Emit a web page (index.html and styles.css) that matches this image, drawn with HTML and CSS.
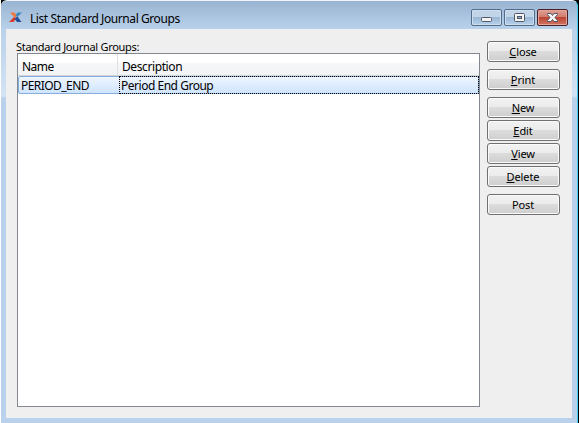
FILE: index.html
```html
<!DOCTYPE html>
<html lang="en">
<head>
<meta charset="utf-8">
<title>List Standard Journal Groups</title>
<link rel="stylesheet" href="styles.css">
</head>
<body>
<div class="window">
  <header class="titlebar">
    <svg class="logo" width="14" height="11" viewBox="0 0 14 11">
      <path d="M1 .5h4.500l2.500 3.500-2 2z" fill="#f0783c"/>
      <path d="M5 5l2 2-2.500 3H0z" fill="#d83a2c"/>
      <path d="M8.500 .5H13L8.500 5 6.500 3z" fill="#3c8cc0"/>
      <path d="M8.500 4.500L12.500 10H8L5.500 6.500z" fill="#244f9c"/>
    </svg>
    <h1 class="title">List Standard Journal Groups</h1>
    <div class="controls">
      <button class="control" aria-label="Minimize"><svg width="29" height="15" viewBox="0 0 29 15"><rect x="9.500" y="7.500" width="10" height="4" rx="1" fill="#f4f4f4" stroke="#535666"/></svg></button>
      <button class="control" aria-label="Maximize"><svg width="29" height="15" viewBox="0 0 29 15"><rect x="9.500" y="3.500" width="10" height="8" rx="1" fill="#f4f4f4" stroke="#535666"/><rect x="12.500" y="6.500" width="4" height="2" fill="#8eb1d2" stroke="#535666"/></svg></button>
      <button class="control control-close" aria-label="Close window"><svg width="29" height="15" viewBox="0 0 29 15"><path d="M9.500 3.500h3.500l1.500 2 1.500-2h3.500v1L17 7.500l2.500 3v1H16l-1.500-2-1.500 2H9.500v-1l2.500-3-2.500-3z" fill="#f6f6f6" stroke="#535666"/></svg></button>
    </div>
  </header>
  <main class="content">
    <section class="groups">
      <div class="label">Standard Journal Groups:</div>
      <div class="list">
        <div class="row head"><span class="name"><span class="h-name">Name</span></span><span class="desc"><span class="h-desc">Description</span></span></div>
        <div class="row selected"><span class="name"><span class="v-name">PERIOD_END</span></span><span class="desc focus"><span class="v-desc">Period End Group</span></span></div>
      </div>
    </section>
    <nav class="actions">
      <button class="action gap"><u>C</u>lose</button>
      <button class="action gap"><u>P</u>rint</button>
      <button class="action"><u>N</u>ew</button>
      <button class="action"><u>E</u>dit</button>
      <button class="action"><u>V</u>iew</button>
      <button class="action gap"><u>D</u>elete</button>
      <button class="action">Post</button>
    </nav>
  </main>
</div>
</body>
</html>
```
FILE: styles.css
```css
* { box-sizing: border-box; }
body {
  margin: 0;
  height: 423px;
  overflow: hidden;
  background: linear-gradient(90deg, #fff 1px, #000 1px);
  font-family: "Noto Sans", "Open Sans", sans-serif;
  font-size: 12px;
  color: #000;
}
.window {
  width: 577px;
  height: 423px;
  margin-left: 1px;
  padding: 0 5px 5px;
  border-top: 1px solid #f0f6fc;
  border-right: 1px solid #43c8ee;
  border-radius: 6px 6px 0 0;
  background: linear-gradient(#98b4d2 0, #b9d1ea 28px, #d4e3f4 95px, #b9d1ea 97px);
}
.titlebar {
  display: flex;
  height: 28px;
  padding: 8px 4px 0 3px;
}
.logo { margin-top: 3px; }
.title {
  margin: 1px 0 0 7px;
  font-size: 12px;
  line-height: 18px;
  font-weight: 400;
  letter-spacing: -.42px;
  white-space: nowrap;
}
.controls { display: flex; gap: 2px; margin-left: auto; }
.control {
  width: 31px;
  height: 17px;
  padding: 0;
  border: 1px solid #536d8c;
  border-radius: 2px;
  box-shadow: inset 0 0 0 1px #cfdeed;
  background: linear-gradient(#c2d5e8 0 46%, #98b5d4 47%, #b7d1ec);
}
.control svg { display: block; }
.control-close {
  border-color: #4a2026;
  box-shadow: inset 0 0 0 1px #e2a49b;
  background: linear-gradient(#dda096, #d47c6e 46%, #b9422f 47%, #d07563);
}
.content {
  display: flex;
  height: 389px;
  padding: 12px 12px 11px 11px;
  background: #efefef;
}
.groups { width: 463px; margin-right: 7px; }
.label {
  height: 12px;
  margin-left: -1px;
  font-size: 11px;
  line-height: 12px;
  letter-spacing: -.3px;
  white-space: nowrap;
}
.list {
  height: 354px;
  border: 1px solid #828790;
  background: #fff;
}
.row { display: flex; white-space: nowrap; }
.head {
  height: 22px;
  line-height: 25px;
  background: linear-gradient(#fff 40%, #f7f8fa 41%, #f1f2f4);
  border-bottom: 1px solid #d5d5d5;
}
.name { width: 100px; padding-left: 4px; border-right: 1px solid #dfe1e5; }
.desc { flex: 1; padding-left: 4px; }
.selected {
  height: 18px;
  line-height: 17px;
  border: 1px solid #84acdd;
  border-radius: 2px;
  background: linear-gradient(#eef6ff, #cfe4fd);
}
.selected .name { padding-left: 2px; border-right: 0; }
.focus {
  padding-left: 1px;
  border: 1px dotted #000;
  margin: -1px -1px -1px 0;
  line-height: 17px;
}
.h-name { letter-spacing: -.5px; }
.h-desc { letter-spacing: -.4px; }
.v-name { letter-spacing: -.55px; }
.v-desc { letter-spacing: -.48px; }
.actions { display: flex; flex-direction: column; gap: 2px; width: 73px; }
.action {
  height: 21px;
  padding: 0 1px 0 0;
  border: 1px solid #707070;
  border-radius: 3px;
  box-shadow: inset 0 0 0 1px #fafafa;
  background: linear-gradient(#f2f2f2, #ebebeb 49%, #dcdcdc 50%, #cecece);
  font: 11px/18px "Noto Sans", "Open Sans", sans-serif;
  letter-spacing: -.1px;
  color: #000;
}
.action u { text-underline-offset: 1px; }
.gap { margin-bottom: 5px; }
```
